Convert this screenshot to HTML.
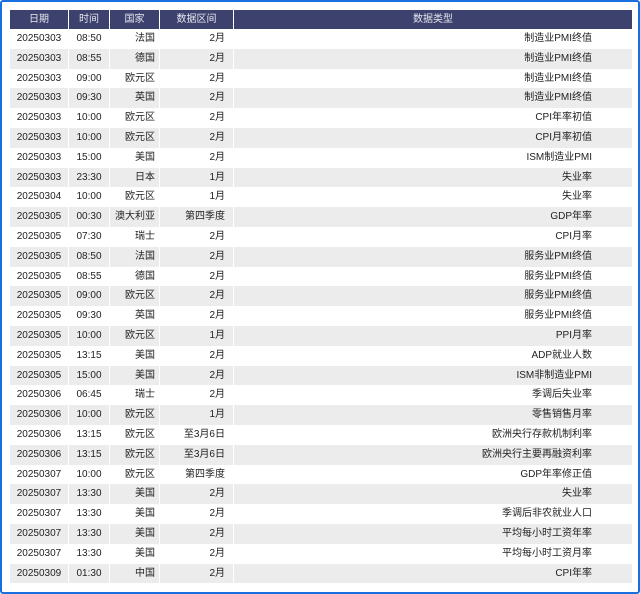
<!DOCTYPE html><html><head><meta charset="utf-8"><style>
*{margin:0;padding:0;box-sizing:border-box}
body{width:640px;height:594px;background:#fff;position:relative;overflow:hidden;font-family:"Liberation Sans","Noto Sans CJK SC",sans-serif;font-size:10px;color:#222}
.frame{position:absolute;left:0;top:0;width:640px;height:594px;border:2px solid #1a6fe0;border-radius:3px}
.t{position:absolute;left:10px;top:10px;width:622px}
.r{display:flex;height:19.8px;line-height:19.8px}
.r span{display:block;height:100%;margin-right:1px;white-space:nowrap;overflow:hidden}
.r span:nth-child(1){width:58px;text-align:center}
.r span:nth-child(2){width:40px;text-align:center}
.r span:nth-child(3){width:49px;text-align:right;padding-right:4px}
.r span:nth-child(4){width:73px;text-align:right;padding-right:8px}
.r span:nth-child(5){flex:1;margin-right:0;text-align:right;padding-right:40px}
.h{height:19px;line-height:19px}
.h span{background:#3c416d;color:#e8e8f0;text-align:center!important;padding:0!important}
.r:nth-child(odd):not(.h) span{background:#ececec}
</style></head><body><div class="frame"></div>
<div class="t">
<div class="r h"><span>日期</span><span>时间</span><span>国家</span><span>数据区间</span><span>数据类型</span></div>
<div class="r"><span>20250303</span><span>08:50</span><span>法国</span><span>2月</span><span>制造业PMI终值</span></div>
<div class="r"><span>20250303</span><span>08:55</span><span>德国</span><span>2月</span><span>制造业PMI终值</span></div>
<div class="r"><span>20250303</span><span>09:00</span><span>欧元区</span><span>2月</span><span>制造业PMI终值</span></div>
<div class="r"><span>20250303</span><span>09:30</span><span>英国</span><span>2月</span><span>制造业PMI终值</span></div>
<div class="r"><span>20250303</span><span>10:00</span><span>欧元区</span><span>2月</span><span>CPI年率初值</span></div>
<div class="r"><span>20250303</span><span>10:00</span><span>欧元区</span><span>2月</span><span>CPI月率初值</span></div>
<div class="r"><span>20250303</span><span>15:00</span><span>美国</span><span>2月</span><span>ISM制造业PMI</span></div>
<div class="r"><span>20250303</span><span>23:30</span><span>日本</span><span>1月</span><span>失业率</span></div>
<div class="r"><span>20250304</span><span>10:00</span><span>欧元区</span><span>1月</span><span>失业率</span></div>
<div class="r"><span>20250305</span><span>00:30</span><span>澳大利亚</span><span>第四季度</span><span>GDP年率</span></div>
<div class="r"><span>20250305</span><span>07:30</span><span>瑞士</span><span>2月</span><span>CPI月率</span></div>
<div class="r"><span>20250305</span><span>08:50</span><span>法国</span><span>2月</span><span>服务业PMI终值</span></div>
<div class="r"><span>20250305</span><span>08:55</span><span>德国</span><span>2月</span><span>服务业PMI终值</span></div>
<div class="r"><span>20250305</span><span>09:00</span><span>欧元区</span><span>2月</span><span>服务业PMI终值</span></div>
<div class="r"><span>20250305</span><span>09:30</span><span>英国</span><span>2月</span><span>服务业PMI终值</span></div>
<div class="r"><span>20250305</span><span>10:00</span><span>欧元区</span><span>1月</span><span>PPI月率</span></div>
<div class="r"><span>20250305</span><span>13:15</span><span>美国</span><span>2月</span><span>ADP就业人数</span></div>
<div class="r"><span>20250305</span><span>15:00</span><span>美国</span><span>2月</span><span>ISM非制造业PMI</span></div>
<div class="r"><span>20250306</span><span>06:45</span><span>瑞士</span><span>2月</span><span>季调后失业率</span></div>
<div class="r"><span>20250306</span><span>10:00</span><span>欧元区</span><span>1月</span><span>零售销售月率</span></div>
<div class="r"><span>20250306</span><span>13:15</span><span>欧元区</span><span>至3月6日</span><span>欧洲央行存款机制利率</span></div>
<div class="r"><span>20250306</span><span>13:15</span><span>欧元区</span><span>至3月6日</span><span>欧洲央行主要再融资利率</span></div>
<div class="r"><span>20250307</span><span>10:00</span><span>欧元区</span><span>第四季度</span><span>GDP年率修正值</span></div>
<div class="r"><span>20250307</span><span>13:30</span><span>美国</span><span>2月</span><span>失业率</span></div>
<div class="r"><span>20250307</span><span>13:30</span><span>美国</span><span>2月</span><span>季调后非农就业人口</span></div>
<div class="r"><span>20250307</span><span>13:30</span><span>美国</span><span>2月</span><span>平均每小时工资年率</span></div>
<div class="r"><span>20250307</span><span>13:30</span><span>美国</span><span>2月</span><span>平均每小时工资月率</span></div>
<div class="r"><span>20250309</span><span>01:30</span><span>中国</span><span>2月</span><span>CPI年率</span></div>
</div></body></html>
